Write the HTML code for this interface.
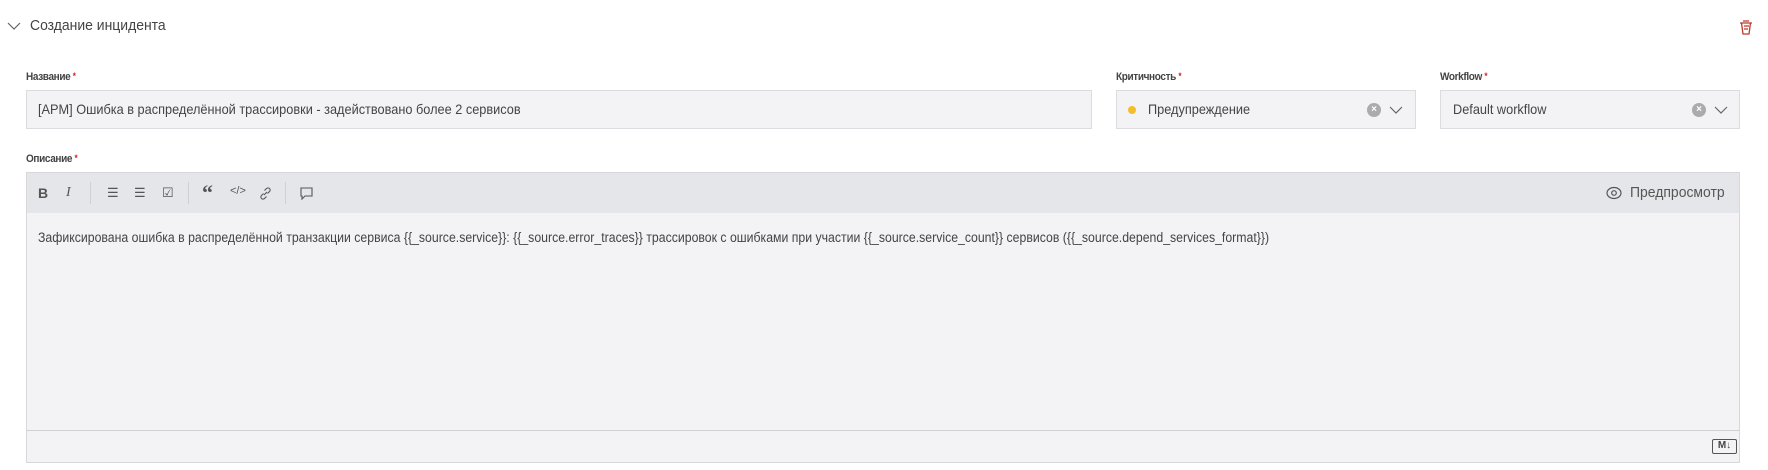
<!DOCTYPE html>
<html><head><meta charset="utf-8"><style>
*{box-sizing:border-box;margin:0;padding:0}
body{width:1768px;height:470px;background:#fff;font-family:"Liberation Sans",sans-serif;color:#3a3a3a;position:relative;overflow:hidden}
.abs{position:absolute}
.n{display:inline-block;transform:scaleX(0.91);transform-origin:0 50%;white-space:nowrap}
.lbl{position:absolute;top:71px;font-size:11px;font-weight:bold;color:#444;letter-spacing:-0.4px}
.lbl b{color:#d02020;font-size:9px;vertical-align:top}
.box{position:absolute;top:90px;height:39px;background:#f3f3f5;border:1px solid #dcdce0;font-size:14px;line-height:37px;color:#444}
.clr{position:absolute;top:12px;width:14px;height:14px;border-radius:50%;background:#a9abaf;color:#fff;font-size:10px;line-height:14px;text-align:center;font-weight:bold}
.tb{position:absolute;top:172px;left:26px;width:1714px;height:42px;background:#e5e6e9;border:1px solid #d8d8dc}
.ic{position:absolute;top:12px;font-size:14px;color:#555}
.sep{position:absolute;top:9px;width:1px;height:22px;background:#cfd0d4}
</style></head><body>
<svg class="abs" style="left:7px;top:21px" width="14" height="10"><path d="M1 2 L7 8 L13 2" fill="none" stroke="#666" stroke-width="1.2"/></svg>
<div class="abs" style="left:30px;top:17px;font-size:15px;color:#444"><span class="n" style="transform:scaleX(0.93)">Создание инцидента</span></div>
<svg class="abs" style="left:1739px;top:18px" width="14" height="18"><path d="M4 3h6M1 5h12M2.5 5l1.5 11h6l1.5-11M5 8h5M5 11h4" fill="none" stroke="#c0392b" stroke-width="1.3"/></svg>

<div class="lbl" style="left:26px"><span class="n">Название <b>*</b></span></div>
<div class="box" style="left:26px;width:1066px;padding-left:11px"><span class="n">[APM] Ошибка в распределённой трассировки - задействовано более 2 сервисов</span></div>

<div class="lbl" style="left:1116px"><span class="n">Критичность <b>*</b></span></div>
<div class="box" style="left:1116px;width:300px;padding-left:31px">
<span class="abs" style="left:11px;top:15px;width:8px;height:8px;border-radius:50%;background:#f4bd2a"></span><span class="n">Предупреждение</span>
<span class="clr" style="left:250px">×</span>
<svg class="abs" style="left:272px;top:14px" width="14" height="10"><path d="M1 2 L7 8 L13 2" fill="none" stroke="#666" stroke-width="1.2"/></svg></div>

<div class="lbl" style="left:1440px"><span class="n">Workflow <b>*</b></span></div>
<div class="box" style="left:1440px;width:300px;padding-left:12px"><span class="n">Default workflow</span>
<span class="clr" style="left:251px">×</span>
<svg class="abs" style="left:273px;top:14px" width="14" height="10"><path d="M1 2 L7 8 L13 2" fill="none" stroke="#666" stroke-width="1.2"/></svg></div>

<div class="lbl" style="left:26px;top:153px"><span class="n">Описание <b>*</b></span></div>
<div class="tb">
<span class="ic" style="left:11px;font-weight:bold">B</span>
<span class="ic" style="left:39px;font-style:italic;font-family:'Liberation Serif',serif">I</span>
<span class="sep" style="left:63px"></span>
<span class="ic" style="left:80px;font-size:13px">☰</span>
<span class="ic" style="left:107px;font-size:13px">☰</span>
<span class="ic" style="left:135px;font-size:13px">☑</span>
<span class="sep" style="left:161px"></span>
<span class="ic" style="left:175px;font-weight:bold;font-size:22px;top:7px;font-family:'Liberation Serif',serif">“</span>
<span class="ic" style="left:203px;font-size:11px">&lt;/&gt;</span>
<svg class="abs" style="left:232px;top:14px" width="13" height="13"><path d="M5 8l3-3M4.5 6.5l-2 2a2 2 0 0 0 3 3l2-2M8.5 6.5l2-2a2 2 0 0 0-3-3l-2 2" fill="none" stroke="#555" stroke-width="1.1"/></svg>
<span class="sep" style="left:258px"></span>
<svg class="abs" style="left:273px;top:14px" width="13" height="13"><path d="M1 1h11v8H5l-3 3V9H1z" fill="none" stroke="#555" stroke-width="1.1"/></svg>
<svg class="abs" style="left:1579px;top:13px" width="16" height="14"><ellipse cx="8" cy="7" rx="7" ry="5.5" fill="none" stroke="#555" stroke-width="1.2"/><circle cx="8" cy="7" r="2.3" fill="none" stroke="#555" stroke-width="1.2"/></svg>
<span class="abs" style="left:1603px;top:11px;font-size:15px;color:#555"><span class="n" style="transform:scaleX(0.93)">Предпросмотр</span></span>
</div>
<div class="abs" style="left:26px;top:213px;width:1714px;height:218px;background:#f3f3f5;border:1px solid #d8d8dc;border-top:none;padding:17px 11px;font-size:13.5px;color:#444;white-space:nowrap"><span class="n">Зафиксирована ошибка в распределённой транзакции сервиса {{_source.service}}: {{_source.error_traces}} трассировок с ошибками при участии {{_source.service_count}} сервисов ({{_source.depend_services_format}})</span></div>
<div class="abs" style="left:26px;top:430px;width:1714px;height:33px;background:#f3f3f5;border:1px solid #d8d8dc;border-top:1px solid #d0d0d4"></div>
<div class="abs" style="left:1712px;top:439px;width:25px;height:15px;border:1.5px solid #555;border-radius:2px;font-size:10px;font-weight:bold;line-height:12px;text-align:center;color:#444">M↓</div>
</body></html>
